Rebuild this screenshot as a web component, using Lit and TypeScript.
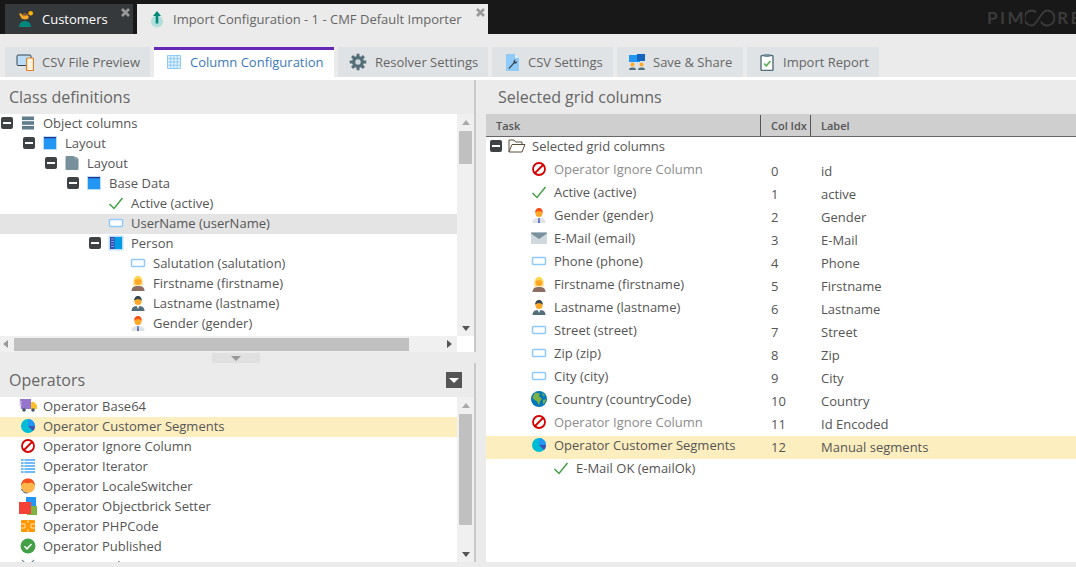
import { LitElement, html, css, svg } from "lit";
import { customElement } from "lit/decorators.js";

const person = (hair: string, skin: string, body: string, extra: any = null, top: any = null) => svg`
  <path d="M2.500 17c0-3.700 2.500-5 6.500-5s6.500 1.300 6.500 5z" fill="${body}"/>
  ${extra}
  <circle cx="9" cy="7.500" r="3.500" fill="${skin}"/>
  <path d="M5.200 7C5 3.500 6.800 2 9 2s4 1.500 3.800 5c-.6-1.200-1.800-1.800-3.800-1.800S5.800 5.800 5.200 7z" fill="${hair}"/>
  ${top}`;

const P: Record<string, any> = {
  customers: svg`<circle cx="14.700" cy="3.300" r="2.300" fill="#ffb300"/><path d="M3 4l3 5h6l1-3-2 1H7L5 3z" fill="#f9a825"/><circle cx="9" cy="6.500" r="3" fill="#f9a825"/><path d="M6.500 5.500c0-2.500 5-2.500 5 0z" fill="#6d4c41"/><path d="M3 17c0-4 3-6 6-6s6 2 6 6z" fill="#00897b"/>`,
  imp: svg`<ellipse cx="9" cy="11.500" rx="6" ry="6" fill="#b2dfdb"/><path d="M9 1l4 5H10.300v7.500H7.700V6H5z" fill="#00897b"/>`,
  devices: svg`<rect x="1" y="2" width="14" height="10.500" rx="1" fill="#bbdefb" stroke="#37474f" stroke-width="1"/><rect x="10.500" y="5" width="7" height="12.500" rx="1" fill="#fff3e0" stroke="#e67e22" stroke-width="1.200"/>`,
  grid: svg`<path d="M2.500 2.500h13v13h-13zM2.500 5.700h13M2.500 9h13M2.500 12.200h13M5.700 2.500v13M9 2.500v13M12.200 2.500v13" fill="#e3f2fd" stroke="#90caf9" stroke-width="1"/>`,
  gear: svg`<g fill="#546e7a"><circle cx="9" cy="9" r="6"/><g stroke="#546e7a" stroke-width="3"><path d="M9 .7v16.600M.7 9h16.600M3.100 3.100l11.800 11.800M14.900 3.100L3.100 14.900"/></g></g><circle cx="9" cy="9" r="2.700" fill="#cfd8dc"/>`,
  wrench: svg`<path d="M3 1h9l4 4v13H3z" fill="#90caf9"/><path d="M12 1v4h4z" fill="#e3f2fd"/><path d="M5.500 15l5-5.500c-.5-1.500.5-3 2.500-3l-1.200 1.500 1 1 1.500-1c0 2-1.500 3-3 2.500l-5 5.500z" fill="#37474f"/>`,
  share: svg`<path d="M1 2h8v3h3v4H1z" fill="#2196f3"/><path d="M9 1h8v7H9z" fill="#1565c0"/><circle cx="4.500" cy="11.500" r="2" fill="#ffa726"/><circle cx="13.500" cy="11.500" r="2" fill="#ffa726"/><path d="M1 17c0-2 1.500-2.500 3.500-2.500S8 15 8 17zM10 17c0-2 1.500-2.500 3.500-2.500S17 15 17 17z" fill="#546e7a"/>`,
  report: svg`<rect x="3" y="2.500" width="12" height="15" rx="1" fill="#fff" stroke="#546e7a" stroke-width="1.400"/><rect x="6.500" y="1" width="5" height="3" fill="#78909c"/><path d="M6 10.500l2.300 2.300L12.500 8" fill="none" stroke="#4caf50" stroke-width="1.500"/>`,
  stack: svg`<g fill="#607d8b"><rect x="3" y="2.500" width="12" height="3.600"/><rect x="3" y="7.200" width="12" height="3.600"/><rect x="3" y="11.900" width="12" height="3.600"/></g>`,
  layout: svg`<rect x="2" y="2" width="14" height="14" fill="#bbdefb"/><rect x="3" y="3" width="12" height="12" fill="#2196f3"/><rect x="3" y="3" width="12" height="1.300" fill="#283593"/>`,
  file: svg`<path d="M2.500 3a1 1 0 011-1h7l1 1h2l2 2v10a1 1 0 01-1 1h-11a1 1 0 01-1-1z" fill="#78909c"/><path d="M11 2l4.500 3.500H12z" fill="#90a4ae"/>`,
  panel: svg`<rect x="1.500" y="1.500" width="15" height="15" fill="#bbdefb"/><rect x="3" y="3" width="12" height="12" fill="#039be5"/><rect x="3" y="3" width="4.500" height="12" fill="#3949ab"/><path d="M4 5h3M4 7.500h3M4 10h3M4 12.500h3" stroke="#90caf9" stroke-width=".7"/>`,
  check: svg`<path d="M2.500 10l4.500 4.500L15.500 4" fill="none" stroke="#43a047" stroke-width="1.500"/>`,
  input: svg`<rect x="2.500" y="5.500" width="13" height="7" rx="1" fill="#fff" stroke="#90caf9" stroke-width="1.500"/>`,
  woman: person("#ffd54f", "#ffa726", "#8d6e63", svg`<path d="M4.300 11.500C3.800 7 4.500 2.500 9 2.500s5.200 4.500 4.700 9z" fill="#ffe082"/>`),
  man: person("#37474f", "#ffa726", "#546e7a", svg`<path d="M7.500 12h3L9 15z" fill="#eceff1"/>`),
  gender: person("#f4511e", "#ffa726", "#dde3e6", svg`<path d="M8.300 12h1.400l.3 5H8z" fill="#5c6bc0"/>`),
  mail: svg`<rect x="1" y="3.500" width="16" height="11.500" rx="1" fill="#cfd8dc"/><path d="M1 3.500h16v1L9 10 1 4.500z" fill="#78909c"/>`,
  globe: svg`<circle cx="9" cy="9" r="8" fill="#0277bd"/><path d="M5 2.500l5 1-1 3 3 2-2 3-1 4-2-4-3-2-1.500-2zM12 2.500l3 3-2 1zM13 10l3-1-1 4-2 1z" fill="#7cb342"/>`,
  forbid: svg`<circle cx="9" cy="9" r="6" fill="none" stroke="#d50000" stroke-width="1.800"/><path d="M5 13L13 5" stroke="#d50000" stroke-width="1.800"/>`,
  pie: svg`<circle cx="9" cy="9" r="7" fill="#00bcd4"/><path d="M9 2a7 7 0 017 7H9z" fill="#2196f3"/><path d="M9 9h7a7 7 0 01-2 5z" fill="#3f51b5"/>`,
  truck: svg`<path d="M1 2h11v10H2z" fill="#9575cd"/><path d="M0 5h3M0 8h3" stroke="#d1c4e9"/><path d="M12 5h3l3 3v4h-6z" fill="#fbc02d"/><circle cx="5" cy="13" r="1.800" fill="#455a64"/><circle cx="14" cy="13" r="1.800" fill="#455a64"/>`,
  list: svg`<path d="M2 3h14M2 6h14M2 9h14M2 12h14M2 15h14" stroke="#42a5f5" stroke-width="1.700"/><path d="M5 2v14" stroke="#fff" stroke-width=".8"/>`,
  locale: svg`<circle cx="9" cy="9" r="7" fill="#ffb74d"/><path d="M2 9c0-5 3-7.500 7-7.500s7 2.500 7 7.500c-1-2-2-3.500-4-3.500-2 1-5 1-6 0-2 0-3 1.500-4 3.500z" fill="#f4511e"/><path d="M2.500 12c1 3 3 4 6 4" fill="none" stroke="#455a64" stroke-width="1"/>`,
  bricks: svg`<rect x="7" y="0" width="10" height="10" fill="#2196f3"/><rect x="8" y="9" width="10" height="9" fill="#7cb342"/><rect x="0" y="5" width="12" height="12" fill="#f44336"/>`,
  chip: svg`<rect x="2" y="3" width="14" height="12" rx="1" fill="#ff9800"/><path d="M2 7h4v4H2M16 7h-4v4h4M9 3v3M9 12v3" fill="none" stroke="#ffe0b2" stroke-width="1"/>`,
  published: svg`<circle cx="9" cy="9" r="7.500" fill="#43a047"/><path d="M5.500 9.300l2.500 2.500 4.500-4.800" fill="none" stroke="#fff" stroke-width="1.500"/>`,
  split: svg`<path d="M3 3l6 6 6-6M9 9v6" fill="none" stroke="#78909c" stroke-width="1.200"/>`,
  folder: svg`<path d="M1 15V3h5l1.500 2H14v2.500M1 15l3-7.500h13L14 15z" fill="#fff" stroke="#5d4e37" stroke-width="1"/>`,
};

const icon = (n: string) =>
  html`<svg class="ic" viewBox="0 0 18 18" width="18" height="18">${P[n]}</svg>`;

type Node = { d: number; open?: boolean; i?: string; t: string; cls?: string; idx?: string; label?: string };

const tree: Node[] = [
  { d: 0, open: true, i: "stack", t: "Object columns" },
  { d: 1, open: true, i: "layout", t: "Layout" },
  { d: 2, open: true, i: "file", t: "Layout" },
  { d: 3, open: true, i: "layout", t: "Base Data" },
  { d: 4, i: "check", t: "Active (active)" },
  { d: 4, i: "input", t: "UserName (userName)", cls: "sel" },
  { d: 4, open: true, i: "panel", t: "Person" },
  { d: 5, i: "input", t: "Salutation (salutation)" },
  { d: 5, i: "woman", t: "Firstname (firstname)" },
  { d: 5, i: "man", t: "Lastname (lastname)" },
  { d: 5, i: "gender", t: "Gender (gender)" },
];

const ops: Node[] = [
  { d: 0, i: "truck", t: "Operator Base64" },
  { d: 0, i: "pie", t: "Operator Customer Segments", cls: "hl" },
  { d: 0, i: "forbid", t: "Operator Ignore Column" },
  { d: 0, i: "list", t: "Operator Iterator" },
  { d: 0, i: "locale", t: "Operator LocaleSwitcher" },
  { d: 0, i: "bricks", t: "Operator Objectbrick Setter" },
  { d: 0, i: "chip", t: "Operator PHPCode" },
  { d: 0, i: "published", t: "Operator Published" },
  { d: 0, i: "split", t: "Operator Splitter" },
];

const cols: Node[] = [
  { d: 0, open: true, i: "folder", t: "Selected grid columns", idx: "", label: "" },
  { d: 1, i: "forbid", t: "Operator Ignore Column", cls: "off", idx: "0", label: "id" },
  { d: 1, i: "check", t: "Active (active)", idx: "1", label: "active" },
  { d: 1, i: "gender", t: "Gender (gender)", idx: "2", label: "Gender" },
  { d: 1, i: "mail", t: "E-Mail (email)", idx: "3", label: "E-Mail" },
  { d: 1, i: "input", t: "Phone (phone)", idx: "4", label: "Phone" },
  { d: 1, i: "woman", t: "Firstname (firstname)", idx: "5", label: "Firstname" },
  { d: 1, i: "man", t: "Lastname (lastname)", idx: "6", label: "Lastname" },
  { d: 1, i: "input", t: "Street (street)", idx: "7", label: "Street" },
  { d: 1, i: "input", t: "Zip (zip)", idx: "8", label: "Zip" },
  { d: 1, i: "input", t: "City (city)", idx: "9", label: "City" },
  { d: 1, i: "globe", t: "Country (countryCode)", idx: "10", label: "Country" },
  { d: 1, i: "forbid", t: "Operator Ignore Column", cls: "off", idx: "11", label: "Id Encoded" },
  { d: 1, i: "pie", t: "Operator Customer Segments", cls: "hl", idx: "12", label: "Manual segments" },
  { d: 2, i: "check", t: "E-Mail OK (emailOk)", idx: "", label: "" },
];

const tabs = [
  { i: "devices", t: "CSV File Preview", w: 145, g: 8 },
  { i: "grid", t: "Column Configuration", active: true, w: 180, g: 7 },
  { i: "gear", t: "Resolver Settings", w: 150, g: 8 },
  { i: "wrench", t: "CSV Settings", w: 121, g: 7 },
  { i: "share", t: "Save & Share", w: 126, g: 7 },
  { i: "report", t: "Import Report", w: 132, g: 7 },
];

@customElement("app-root")
export class AppRoot extends LitElement {
  static styles = css`
    :host {
      display: flex; flex-direction: column; width: 1076px; height: 567px; overflow: hidden;
      background: #ebebeb; font: 13px/20px "Open Sans", sans-serif; color: #555;
    }
    * { box-sizing: border-box; }
    .ic { display: block; flex: none; }
    .top { display: flex; height: 34px; background: #181818; padding: 4px 0 0 5px; gap: 4px; flex: none; overflow: hidden; }
    .mt { position: relative; display: flex; align-items: center; height: 30px; white-space: nowrap; }
    .mt.dark { width: 128px; background: #35393c; color: #fff; padding-left: 11px; }
    .mt.light { width: 351px; background: #ebebeb; color: #666; padding-left: 10px; }
    .mt.dark .ic { margin-right: 8px; }
    .mt.light .ic { margin-right: 7px; margin-left: 1px; }
    .x { position: absolute; top: 4px; right: 3px; }
    .x path { stroke: #999; stroke-width: 2.600; }
    .logo { margin-left: auto; display: flex; align-items: center; height: 30px; padding-bottom: 3px; width: 89px; flex: none; color: #3b3b3b; font: 17px/24px "Lato", sans-serif; font-weight: 700; letter-spacing: 2.500px; white-space: nowrap; overflow: hidden; }
    .logo svg { margin: 0 2px 0 -1px; flex: none; }
    .subtabs { display: flex; gap: 4px; padding: 13px 0 0 5px; height: 43px; flex: none; }
    .st { display: flex; align-items: center; height: 30px; padding: 0 0 0 11px; background: #e0e3e5; color: #666; white-space: nowrap; }
    .st.active { background: #fff; color: #3d7ab8; box-shadow: inset 0 3px 0 #6428b4; }
    .strip { height: 3px; background: #fff; flex: none; }
    .main { flex: 1; display: flex; min-height: 0; margin-bottom: 5px; }
    .left { width: 476px; display: flex; flex-direction: column; flex: none; }
    .sec { display: flex; flex-direction: column; border-right: 2px solid #c9c9c9; min-height: 0; }
    .sec.a { height: 272px; }
    .sec.b { flex: 1; }
    .split { height: 11px; flex: none; display: flex; justify-content: center; margin-right: 1px; }
    .grip { width: 48px; height: 10px; margin-top: 1px; background: #e0e0e0; display: flex; align-items: center; justify-content: center; margin-right: 3px; }
    .title { font-size: 16px; line-height: 22px; color: #666; flex: none; display: flex; align-items: center; justify-content: space-between; padding-left: 9px; }
    .a .title { height: 34px; }
    .b .title { height: 34px; padding-right: 12px; }
    .tb { width: 16px; height: 16px; background: #555; display: flex; align-items: center; justify-content: center; }
    .body { flex: 1; display: flex; min-height: 0; background: #fff; }
    .rows { flex: 1; overflow: hidden; min-width: 0; }
    .row { display: flex; align-items: center; height: 20px; padding-bottom: 2px; white-space: nowrap; }
    .row.sel { background: #e4e4e4; }
    .row.hl { background: #fdeebf; }
    .off .txt { color: #8c8c8c; }
    .slot { width: 19px; flex: none; }
    .box { width: 12px; height: 12px; border-radius: 2px; background: #3e4245; display: flex; align-items: center; justify-content: center; margin-left: 1px; }
    .box::after { content: ""; width: 8px; height: 2.500px; background: #fff; }
    .iw { width: 24px; flex: none; }
    .vs { width: 17px; flex: none; background: #f0f0f0; display: flex; flex-direction: column; align-items: center; }
    .thumb { width: 13px; background: #c0c0c0; flex: none; }
    .sp { flex: 1; }
    .tri { width: 0; height: 0; flex: none; border-style: solid; border-color: transparent; }
    .up { border-width: 0 4px 5px; border-bottom-color: #aaa; }
    .dn { border-width: 5px 4px 0; border-top-color: #555; }
    .lf { border-width: 4px 5px 4px 0; border-right-color: #999; }
    .rt { border-width: 4px 0 4px 5px; border-left-color: #555; }
    .wht { border-width: 5px 5px 0; border-top-color: #fff; }
    .grey { border-width: 5px 5px 0; border-top-color: #999; }
    .hs { display: flex; height: 16px; flex: none; }
    .hst { width: 457px; background: #f0f0f0; display: flex; align-items: center; }
    .hth { width: 395px; height: 13px; background: #c0c0c0; margin-left: 6px; }
    .hc { width: 17px; background: #fff; }
    .right { flex: 1; margin-left: 10px; display: flex; flex-direction: column; min-width: 0; }
    .gh { display: flex; height: 23px; background: #cfcfcf; border-bottom: 1px solid #666; flex: none; font-size: 11px; font-weight: 600; color: #555; }
    .gh > div { display: flex; align-items: center; margin-top: 1px; }
    .c1 { width: 274px; flex: none; }
    .c2 { width: 50px; flex: none; }
    .c3 { flex: 1; }
    .gh .c1 { padding-left: 10px; }
    .gh .c2 { padding-left: 10px; border-left: 1px solid #555; }
    .gh .c3 { padding-left: 10px; border-left: 1px solid #555; }
    .gb { flex: 1; background: #fff; }
    .gr { display: flex; height: 23px; align-items: center; white-space: nowrap; }
    .gr.hl { background: #fdeebf; }
    .gr .c1 { padding: 0 0 3px 3px; }
    .gr .c2 { padding: 0 0 2px 11px; }
    .gr .c3 { padding: 0 0 2px 11px; }
    .gr .row { background: none; }
  `;

  private node(n: Node) {
    return html`<div class="row ${n.cls ?? ""}" style="padding-left:${n.d * 22}px">
      <div class="slot">${n.open ? html`<div class="box"></div>` : null}</div>
      <div class="iw">${n.i ? icon(n.i) : null}</div>
      <span class="txt">${n.t}</span>
    </div>`;
  }

  render() {
    return html`
      <div class="top">
        <div class="mt dark">${icon("customers")}Customers
          <svg class="x" width="9" height="9" viewBox="0 0 9 9"><path d="M1 1l7 7M8 1L1 8"/></svg>
        </div>
        <div class="mt light">${icon("imp")}Import Configuration - 1 - CMF Default Importer
          <svg class="x" width="9" height="9" viewBox="0 0 9 9"><path d="M1 1l7 7M8 1L1 8"/></svg>
        </div>
        <div class="logo">PIM<svg width="30" height="18" viewBox="0 0 30 18"><path d="M11 3.500C9.500 2 8 1.500 7 1.500a7 7 0 100 15c5 0 9-15 15-15a7 7 0 110 15c-4 0-6-4-6-4" fill="none" stroke="#3b3b3b" stroke-width="1.800"/></svg>RE</div>
      </div>
      <div class="subtabs">
        ${tabs.map((t) => html`<div class="st ${t.active ? "active" : ""}" style="width:${t.w}px;gap:${t.g}px">${icon(t.i)}${t.t}</div>`)}
      </div>
      <div class="strip"></div>
      <div class="main">
        <div class="left">
          <div class="sec a">
            <div class="title">Class definitions</div>
            <div class="body">
              <div class="rows">${tree.map((n) => this.node(n))}</div>
              <div class="vs" style="padding-top:6px">
                <div class="tri up"></div>
                <div class="thumb" style="height:33px;margin-top:6px"></div>
                <div class="sp"></div>
                <div class="tri dn" style="margin-bottom:5px"></div>
              </div>
            </div>
            <div class="hs">
              <div class="hst">
                <div class="tri lf" style="margin-left:3px"></div>
                <div class="hth"></div>
                <div class="sp"></div>
                <div class="tri rt" style="margin-right:5px"></div>
              </div>
              <div class="hc"></div>
            </div>
          </div>
          <div class="split"><div class="grip"><div class="tri grey"></div></div></div>
          <div class="sec b">
            <div class="title">Operators<div class="tb"><div class="tri wht"></div></div></div>
            <div class="body">
              <div class="rows">${ops.map((n) => this.node(n))}</div>
              <div class="vs" style="padding-top:6px">
                <div class="tri up"></div>
                <div class="thumb" style="height:111px;margin-top:6px"></div>
                <div class="sp"></div>
                <div class="tri dn" style="margin-bottom:5px"></div>
              </div>
            </div>
          </div>
        </div>
        <div class="right">
          <div class="title" style="height:34px;padding-left:12px">Selected grid columns</div>
          <div class="gh"><div class="c1">Task</div><div class="c2">Col Idx</div><div class="c3">Label</div></div>
          <div class="gb">
            ${cols.map((n) => html`<div class="gr ${n.cls ?? ""}">
              <div class="c1">${this.node({ ...n, cls: n.cls === "off" ? "off" : "" })}</div>
              <div class="c2">${n.idx}</div>
              <div class="c3">${n.label}</div>
            </div>`)}
          </div>
        </div>
      </div>
    `;
  }
}
